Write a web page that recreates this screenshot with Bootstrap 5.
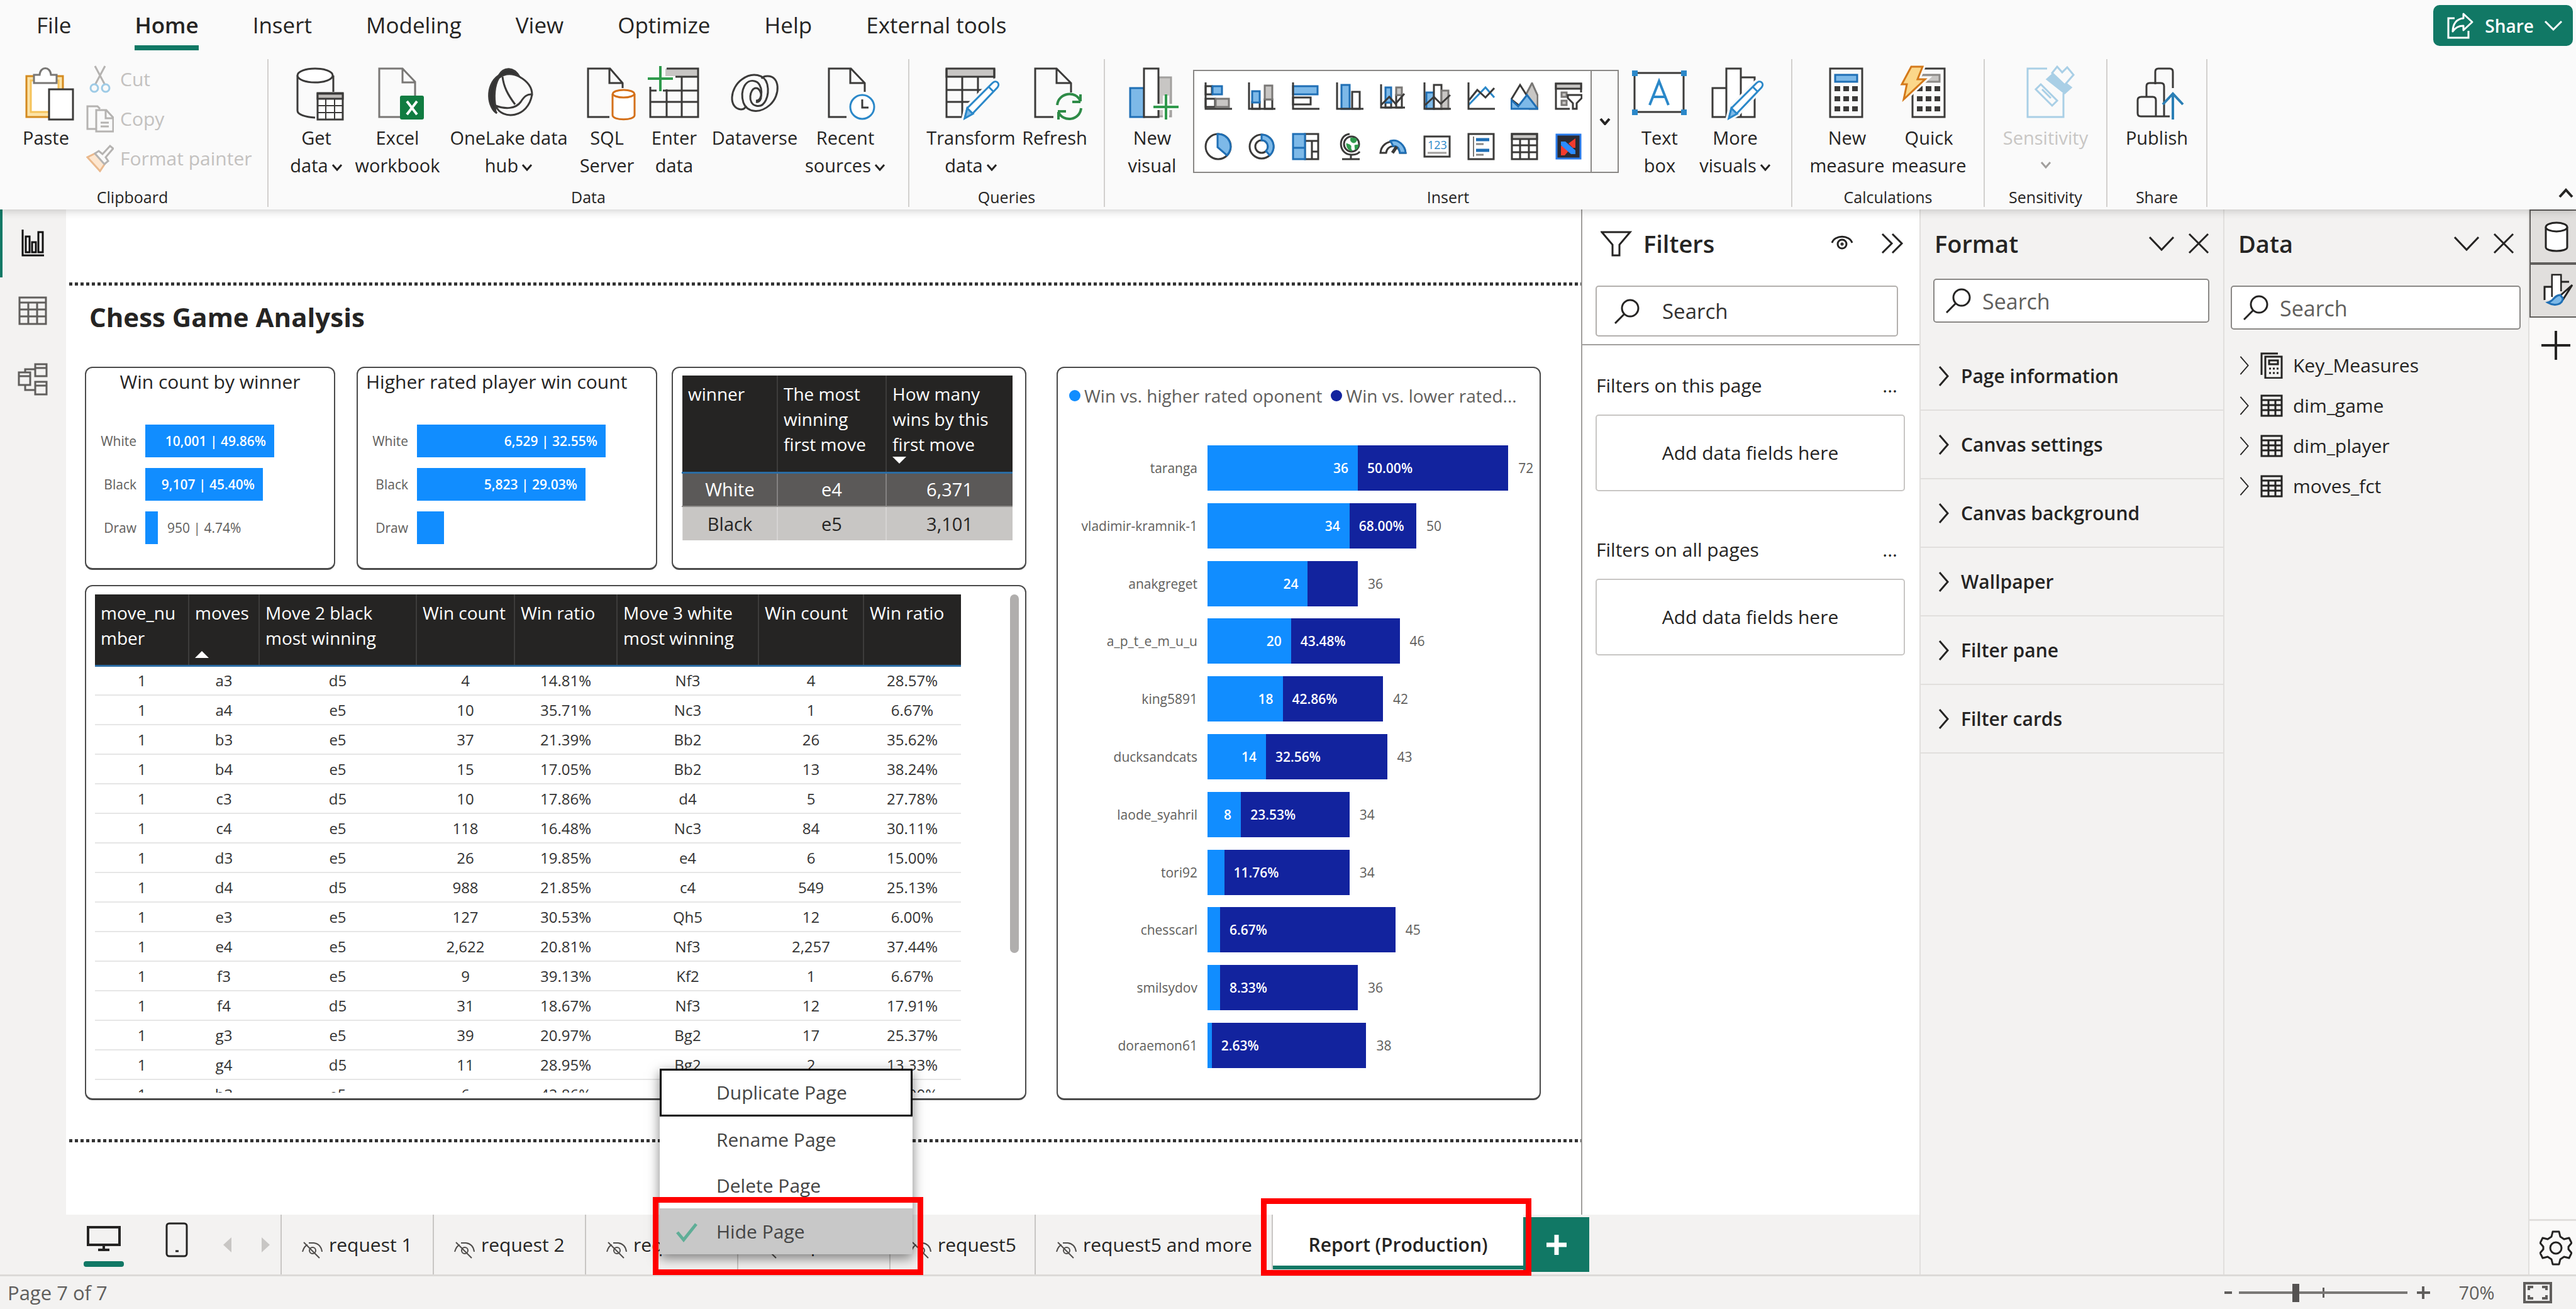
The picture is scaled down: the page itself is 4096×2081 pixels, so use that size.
<!DOCTYPE html>
<html lang="en">
<head>
<meta charset="utf-8">
<meta name="viewport" content="width=device-width, initial-scale=1">
<title>Chess Game Analysis</title>
<link href="https://cdn.jsdelivr.net/npm/bootstrap@5.3.0/dist/css/bootstrap.min.css" rel="stylesheet">
<style>
:root{--ink:#252423;--muted:#605e5c;--pane:#f3f2f1;--rule:#e1dfdd;--green:#117865;--sky:#118dff;--navy:#12239e}
body{font-family:"Open Sans","Noto Sans",sans-serif;font-size:30px;line-height:44px;color:var(--ink);background:var(--pane);overflow:hidden}
button{background:none;border:0;padding:0;color:inherit;text-align:inherit;line-height:inherit}
svg{display:block;flex:none;fill:none;stroke:currentColor}
/* ribbon */
.ribbon{background:#fafafa;z-index:3;box-shadow:0 3px 12px rgba(0,0,0,.18)}
.ribbon-tabs{height:94px;padding-left:58px;padding-right:5px;gap:86px}
.ribbon-tabs a{color:#252423;text-decoration:none;font-size:35px;line-height:48px;padding:16px 0 8px;border-bottom:8px solid transparent}
.ribbon-tabs a:first-child{margin-right:15px}
.ribbon-tabs a.active{font-weight:600;border-color:var(--green)}
.share-btn{background:var(--green);color:#fff;border-radius:10px;height:65px;margin-top:8px;padding:0 16px 0 20px;font-size:28px;font-weight:600;gap:16px}
.ribbon-body{height:235px;margin-bottom:4px}
.rgroup{border-right:2px solid #d2d0ce}
.rgroup .tools{height:204px;padding-top:10px}
.rgroup .caption{font-size:25px;line-height:31px;text-align:center}
.rbtn{width:130px;white-space:nowrap;font-size:29px;text-align:center}
.rbtn svg.big{width:96px;height:88px;margin-bottom:5px;stroke:#3b3a39;stroke-width:3}
.chev{width:18px;height:11px;stroke-width:3;display:inline-block;margin-left:5px}
.clip-list{margin-left:15px;margin-top:-10px}
.clip-list button{height:63px;gap:10px;color:#c3c1bf;white-space:nowrap}
.clip-list svg{width:44px;height:44px;stroke:#b5b3b1;stroke-width:3}
.gallery{width:677px;height:164px;margin:7px 14px 0 9px;border:2px solid #8a8886;background:#fff}
.gallery .cells{display:grid;grid-template-columns:repeat(9,1fr);grid-template-rows:1fr 1fr;padding-left:3px;flex:1}
.gallery .cells button{display:flex;align-items:center;justify-content:center}
.gallery .cells svg{width:44px;height:44px;stroke:#3b3a39;stroke-width:3}
.gallery .more{width:43px;border-left:2px solid #8a8886;background:#fafafa}
/* frame */
.rail{width:105px;background:var(--pane);border-left:4px solid transparent}
.rail button{height:108px;color:#605e5c;width:96px}
.rail svg{width:48px;height:52px;stroke-width:3}
.rail .on{box-shadow:-4px 0 0 var(--green);color:#111}
.canvas{background:#fff;padding:116px 0 115px 5px}
.sheet{padding:20px 64px 62px 25px;position:relative}
.dots{height:5px;background:repeating-linear-gradient(90deg,#333 0 5px,transparent 5px 9px)}
.sheet h1{font-size:42px;line-height:60px;font-weight:700;margin:0 0 49px 7px}
.halves{display:grid;grid-template-columns:minmax(0,1545fr) minmax(0,770fr);grid-template-rows:minmax(0,1fr);min-height:0}
.thirds{display:grid;grid-template-columns:minmax(0,432fr) minmax(0,501fr) minmax(0,564fr);height:323px;flex:none}
.tile{border:2px solid #4a4a4a;border-bottom-width:3px;border-radius:12px;background:#fff}
.tile h2{font-size:30px;line-height:44px;font-weight:400;text-align:center;margin:0}
.hbars{padding:46px 0 0 0;display:grid;gap:17px}
.hbars .line{display:flex;align-items:center;height:52px;font-size:21px;color:var(--muted)}
.hbars .cat{width:80px;text-align:right;margin-right:14px}
.hbars .fill{background:var(--sky);height:52px;line-height:52px;color:#fff;text-align:right;padding-right:13px;font-weight:600;white-space:nowrap;overflow:hidden}
.hbars .fill.thin{padding:0}
.hbars .out{margin-left:15px}
table.grid{table-layout:fixed;border-collapse:collapse}
.grid th{background:#252423;color:#fff;font-weight:400;font-size:28px;line-height:40px;vertical-align:top;border-left:2px solid #3d3c3b;border-bottom:3px solid #2b6ca3;padding:9px 0 0 9px;text-align:left;white-space:nowrap}
.grid th:first-child{border-left:0}
.grid .sort{display:block;width:0;height:0;border:11px solid transparent}
.g-small th{height:154px}
.g-small .sort{border-bottom:0}
.g-small td{text-align:center;font-size:29px;height:54px;border-left:2px solid rgba(255,255,255,.25);padding:0}
.g-small .dark td{background:#5b5958;color:#fff;border-bottom:2px solid #8f8d8b}
.g-small .lite td{background:#c8c6c4;color:#252423}
.g-big th{height:113px;padding-top:9px}
.g-big td{text-align:center;font-size:24px;line-height:34px;height:47px;border-bottom:2px solid #e6e6e6;padding:0;color:#333}
.moves{padding:13px 14px 9px;overflow:hidden;flex:1 1 0;min-height:0}
.thumb{width:14px;height:570px;border-radius:7px;background:#b0aead;margin-right:-4px}
.players{padding:22px 0 48px;display:flex;flex-direction:column}
.legend{font-size:28px;line-height:44px;color:var(--muted);white-space:nowrap;padding-left:18px;margin-bottom:57px}
.legend i{width:18px;height:18px;border-radius:50%;margin-right:6px}
.legend i+i{margin-left:14px}
.stack{display:flex;align-items:center;font-size:21px;color:var(--muted)}
.stack .cat{width:222px;text-align:right;margin-right:16px}
.stack .track{flex:1;display:flex;align-items:center}
.stack .a,.stack .b{height:72px;line-height:72px;color:#fff;font-weight:600;white-space:nowrap}
.stack .a{background:var(--sky);text-align:right}
.stack .b{background:var(--navy)}
.stack .a span,.stack .b span{padding:0 15px}
.stack .sum{margin-left:16px}
/* panes */
.filters{width:538px;border-left:2px solid #a19f9d;background:#fff}
.fpane{width:483px;background:var(--pane);border-left:2px solid var(--rule)}
.dpane{width:485px;background:var(--pane);border-left:2px solid var(--rule)}
.phead{height:108px;font-size:38px;font-weight:600;margin-bottom:2px}
.phead svg{width:36px;height:34px;stroke-width:3}
.searchbox{background:#fff;border:2px solid #8a8886;border-radius:5px;height:70px;padding-left:18px;gap:18px}
.searchbox svg{width:40px;height:40px;stroke-width:3}
.searchbox input{border:0;outline:0;background:none;min-width:0;flex:1;padding:2px 0 0;font-size:34px;color:var(--ink)}
.searchbox input::placeholder{color:#605e5c;opacity:1}
.filters .searchbox{height:81px;border-color:#b3b0ad;margin:13px 34px 12px 21px;padding-left:28px;gap:36px}
.filters .searchbox input{font-size:33px;padding:0}
.filters .searchbox input::placeholder{color:#323130}
.drop{height:122px;border:2px solid #c8c6c4;border-radius:5px;margin:24px 23px 0 21px}
.acc button{height:109px;border-bottom:2px solid var(--rule);font-size:30px;font-weight:600;padding-left:28px;gap:18px;width:100%}
.acc svg{width:18px;height:34px;stroke-width:3}
.tree button{height:64px;padding-left:23px;gap:16px}
.tree svg.c{width:18px;height:32px;stroke-width:2}
.tree svg.t{width:36px;height:42px;stroke-width:3}
.strip{width:76px;background:#faf9f8;border-left:2px solid var(--rule)}
.strip .sel{background:var(--rule);border:2px solid #605e5c;border-right:0;height:86px}
.strip button{padding-left:10px}
.strip svg{width:52px;height:56px;stroke-width:3}
/* page tabs */
.pages{height:95px;background:var(--pane)}
.ptab{width:242px;border-left:2px solid #c8c6c4;position:relative;white-space:nowrap;font-size:30px}
.ptab>button{height:95px;width:100%;padding-left:32px;gap:10px}
.ptab>button svg{width:33px;height:28px;stroke-width:2;margin-top:18px;color:#4f4d4b}
.ptab.wide{width:377px}
.ptab.cur{width:400px;background:#fff;border-bottom:13px solid var(--pane)}
.ptab.cur>button{height:87px;padding:8px 0 0;box-shadow:inset 0 -6px 0 var(--green);font-weight:600}
.add{background:var(--green);width:105px;height:87px;margin-top:4px;color:#fff}
.ctx{position:absolute;left:117px;bottom:32px;width:402px;background:#fff;z-index:2;box-shadow:0 6px 18px rgba(0,0,0,.5);font-size:30px;color:#444}
.ctx button{display:block;width:100%;height:73px;padding-left:90px}
.ctx button:first-child{height:76px;border:3px solid #000;padding-left:87px}
.ctx .on{background:#c8c8c8;position:relative}
.ctx .on svg{position:absolute;left:25px;top:22px;width:36px;height:32px;stroke:#5fae97;stroke-width:5}
.mark-box{position:absolute;border:9px solid #f00;pointer-events:none}
.ctx .mark-box{left:-11px;right:-17px;top:204px;bottom:-33px}
.cur .mark-box{left:-19px;right:-13px;top:-26px;bottom:-15px;z-index:2}
.status{height:55px;border-top:3px solid #dcdad8;color:#605e5c;padding:0 38px 0 12px;font-size:31px}
.zoomer{width:268px;height:30px;background:linear-gradient(#605e5c,#605e5c) 50% 50%/3px 16px no-repeat}
.zoomer input{appearance:none;-webkit-appearance:none;width:100%;height:30px;margin:0;background:linear-gradient(#797775,#797775) 0 50%/100% 4px no-repeat;display:block}
.zoomer input::-webkit-slider-thumb{-webkit-appearance:none;width:11px;height:29px;background:#555352}
</style>
</head>
<body class="vh-100 d-flex flex-column">
<svg width="0" height="0" class="position-absolute" aria-hidden="true">
<symbol id="down" viewBox="0 0 18 11"><path d="M2 1l7 8 7-8"/></symbol>
<symbol id="right" viewBox="0 0 18 34"><path d="M2 2l13 15L2 32"/></symbol>
<symbol id="bigdown" viewBox="0 0 40 34"><path d="M1 7l19 20L39 7"/></symbol>
<symbol id="cross" viewBox="0 0 34 34"><path d="M2 2l30 30M32 2L2 32"/></symbol>
<symbol id="glass" viewBox="0 0 40 40"><circle cx="25" cy="15" r="13"/><path d="M16 24L1 39"/></symbol>
<symbol id="hid" viewBox="0 0 33 28"><path d="M3 1l25 25M1 16C3 9 6 6 9 5M11 2h8c7 1 12 6 13 14"/><circle cx="17" cy="14" r="5"/></symbol>
<symbol id="tbl" viewBox="0 0 36 42"><path d="M2 5h32v32H2zM2 12h32M2 20h32M2 28h32M13 12v25M24 12v25"/></symbol>
<symbol id="pencil" viewBox="0 0 96 88"><path d="M38 84l4-16 40-40c6-6 12 0 8 6L51 76z" fill="#fafafa" stroke="#fafafa" stroke-width="10"/><path d="M38 84l4-16 40-40c6-6 13 1 8 7L50 77z" fill="#fff" stroke="#2b88c9"/><path d="M38 84l4-16 9 9z" fill="#7db9e8" stroke="#2b88c9"/><path d="M76 34l8 8" stroke="#2b88c9"/></symbol>
</svg>

<header class="ribbon position-relative">
  <nav class="ribbon-tabs d-flex align-items-start">
    <a href="#">File</a><a href="#" class="active">Home</a><a href="#">Insert</a><a href="#">Modeling</a><a href="#">View</a><a href="#">Optimize</a><a href="#">Help</a><a href="#">External tools</a>
    <button class="share-btn d-flex align-items-center ms-auto"><svg width="46" height="46" viewBox="0 0 46 46" stroke-width="3"><path d="M14 11H4v31h32V31"/><path d="M28 4l14 13-14 13v-7c-8 0-13 3-17 9 0-12 6-20 17-21z" stroke-linejoin="round"/></svg><span>Share</span><svg width="30" height="18" viewBox="0 0 30 18" stroke-width="3"><path d="M2 2l13 13L28 2"/></svg></button>
  </nav>
  <div class="ribbon-body d-flex">
    <section class="rgroup d-flex flex-column" style="width:427px">
      <div class="tools d-flex">
        <button class="rbtn d-flex flex-column align-items-center ms-4" style="width:98px"><svg class="big" viewBox="0 0 96 88"><path d="M17 17h58v65H17z" fill="#fce3a6" stroke="#d48a1f"/><path d="M24 24h44v50H24z" fill="#fff" stroke="#f5c35b"/><path d="M29 28V15h9c1-14 17-14 18 0h9v13z" fill="#fff" stroke="#797775"/><path d="M53 38h38v48H53z" fill="#fff"/></svg><span>Paste</span></button>
        <div class="clip-list">
          <button class="d-flex align-items-center"><svg viewBox="0 0 44 44"><path d="M14 1l16 30M30 1L14 31"/><circle cx="13" cy="36" r="6" stroke="#9ecbe6"/><circle cx="31" cy="36" r="6" stroke="#9ecbe6"/></svg><span>Cut</span></button>
          <button class="d-flex align-items-center"><svg viewBox="0 0 44 44"><path d="M15 38H2V2h16l4 4M16 8h16l11 12v22H16zM31 8v13h11M23 28h13M23 34h13"/></svg><span>Copy</span></button>
          <button class="d-flex align-items-center"><svg viewBox="0 0 44 44"><path d="M2 20l20 22 8-12-16-16z" fill="#fde6cf" stroke="#eab98d"/><path d="M14 14l6-4 6 5L38 2l5 4-12 14 4 6-6 5z" fill="#fafafa"/></svg><span>Format painter</span></button>
        </div>
      </div>
      <div class="caption pe-1">Clipboard</div>
    </section>
    <section class="rgroup d-flex flex-column" style="width:1019px">
      <div class="tools d-flex" style="padding-left:13px">
        <button class="rbtn d-flex flex-column align-items-center" style="width:126px"><svg class="big" viewBox="0 0 96 88"><path d="M18 16v56c0 6 12 10 28 11M75 16v26"/><ellipse cx="46" cy="16" rx="28" ry="11" fill="#fff"/><path d="M50 44h40v42H50z" fill="#fff"/><path d="M50 45h40v8H50z" fill="#bebbb8"/><path d="M50 64h40M50 75h40M63 53v33M77 53v33" stroke-width="2"/></svg><span>Get</span><span>data<svg class="chev"><use href="#down"/></svg></span></button>
        <button class="rbtn d-flex flex-column align-items-center" style="width:132px"><svg class="big" viewBox="0 0 96 88"><path d="M52 82H19V5h37l20 21v24M56 5v22h20" stroke="#797775"/><rect x="52" y="48" width="38" height="38" rx="3" fill="#107c41" stroke="none"/><path d="M63 57l16 21M79 57L63 78" stroke="#fff" stroke-width="4"/></svg><span>Excel</span><span>workbook</span></button>
        <button class="rbtn d-flex flex-column align-items-center" style="width:222px"><svg class="big" viewBox="0 0 96 88"><path d="M32 16C40 2 56 2 65 18c-12-6-24-5-33 2-7 12-8 30-5 46-1 4 0 8 2 10-14-8-20-44 3-60z" fill="#333"/><path d="M65 18c14 8 20 18 20 28-8-1-13 4-18 12-8 11-24 12-40 6 10 24 52 20 58-18M38 18c2 16 8 28 20 44"/></svg><span>OneLake data</span><span>hub<svg class="chev"><use href="#down"/></svg></span></button>
        <button class="rbtn d-flex flex-column align-items-center" style="width:90px"><svg class="big" viewBox="0 0 96 88"><path d="M52 82H18V5h35l20 23v8M52 5v23h21"/><path d="M57 45v34c0 9 35 9 35 0V45" fill="#fff" stroke="#d4701a"/><ellipse cx="74.500" cy="45" rx="17" ry="6" fill="#fff" stroke="#d4701a"/></svg><span>SQL</span><span>Server</span></button>
        <button class="rbtn d-flex flex-column align-items-center" style="width:124px"><svg class="big" viewBox="0 0 96 88"><path d="M34 5h52v12H34z" fill="#c8c6c4" stroke="none"/><path d="M36 5h50v77H10V34M50 18h36M30 40h56M10 58h76M10 40h10M36 38v44M60 18v64"/><path d="M26 1v40M6 21h40" stroke="#2f9a4c" stroke-width="4"/></svg><span>Enter</span><span>data</span></button>
        <button class="rbtn d-flex flex-column align-items-center" style="width:132px"><svg class="big" viewBox="0 0 96 88"><path d="M26 70C6 68 8 36 28 22c16-12 36-8 40 8 4 18-4 38-18 34-14-3-10-28 0-28s12 24 0 22"/><path d="M68 17c20-1 22 30 4 46-16 14-36 12-42-4-6-20 4-38 18-34 14 3 14 32 2 31"/><path d="M26 70c6 0 7-3 8-6M68 17c-6 0-8 2-9 4"/></svg><span>Dataverse</span></button>
        <button class="rbtn d-flex flex-column align-items-center" style="width:156px"><svg class="big" viewBox="0 0 96 88"><path d="M50 82H22V5h35l22 23v14M56 5v23h23"/><circle cx="75" cy="66" r="19" fill="#fff" stroke="#2b88c9"/><path d="M75 54v13h10"/></svg><span>Recent</span><span>sources<svg class="chev"><use href="#down"/></svg></span></button>
      </div>
      <div class="caption">Data</div>
    </section>
    <section class="rgroup d-flex flex-column" style="width:311px">
      <div class="tools d-flex" style="padding-left:24px">
        <button class="rbtn d-flex flex-column align-items-center" style="width:148px"><svg class="big" viewBox="0 0 96 88"><path d="M9 5h76v13H9z" fill="#c8c6c4"/><path d="M9 5v77h30M85 5v22M9 39h60M9 58h40M34 18v64M59 18v40"/><use href="#pencil"/></svg><span>Transform</span><span>data<svg class="chev"><use href="#down"/></svg></span></button>
        <button class="rbtn d-flex flex-column align-items-center" style="width:118px"><svg class="big" viewBox="0 0 96 88"><path d="M46 82H17V5h34l23 23v15M51 5v23h23"/><path d="M52 63c2-20 30-24 37-6V46M89 58H76M90 68c-2 20-29 23-36 6v12M53 73h13" stroke="#2e8b47" stroke-width="4"/></svg><span>Refresh</span></button>
      </div>
      <div class="caption">Queries</div>
    </section>
    <section class="rgroup d-flex flex-column" style="width:1093px">
      <div class="tools d-flex" style="padding-left:19px">
        <button class="rbtn d-flex flex-column align-items-center" style="width:112px"><svg class="big" viewBox="0 0 96 88"><path d="M58 19h20v62H58z" fill="#c8c6c4" stroke="#a19f9d"/><path d="M13 36h22v46H13z" fill="#7db9e8" stroke="#1f6fb5"/><path d="M35 5h23v77H35z" fill="#fff"/><path d="M70 48v38M50 66h40" stroke="#fafafa" stroke-width="10"/><path d="M70 46v40M50 66h40" stroke="#2f9a4c" stroke-width="4"/></svg><span>New</span><span>visual</span></button>
        <div class="gallery d-flex">
          <div class="cells">
            <button aria-label="Stacked bar"><svg viewBox="0 0 44 44"><path d="M2 6h10v13H2zM2 26h15v13H2z"/><path d="M13 6h15v13H13z" fill="#7db9e8" stroke="#1f6fb5"/><path d="M18 26h21v13H18z" fill="#c8c6c4" stroke="#797775"/><path d="M2 0v42h42"/></svg></button>
            <button aria-label="Stacked column"><svg viewBox="0 0 44 44"><path d="M7 31h12v11H7zM27 27h12v15H27z"/><path d="M7 14h12v18H7z" fill="#7db9e8" stroke="#1f6fb5"/><path d="M27 5h12v22H27z" fill="#c8c6c4" stroke="#797775"/><path d="M2 0v42h42"/></svg></button>
            <button aria-label="Clustered bar"><svg viewBox="0 0 44 44"><path d="M2 6h39v13H2z" fill="#7db9e8" stroke="#1f6fb5"/><path d="M2 24h28v11H2z"/><path d="M2 0v42h42"/></svg></button>
            <button aria-label="Clustered column"><svg viewBox="0 0 44 44"><path d="M9 4h13v38H9z" fill="#7db9e8" stroke="#1f6fb5"/><path d="M26 15h12v27H26z"/><path d="M2 0v42h42"/></svg></button>
            <button aria-label="Line and stacked column"><svg viewBox="0 0 44 44"><path d="M10 32h9v8h-9zM27 20h9v20h-9z"/><path d="M10 8h9v24h-9z" fill="#7db9e8" stroke="#1f6fb5"/><path d="M27 8h9v12h-9z" fill="#c8c6c4" stroke="#797775"/><path d="M3 3v37h38M3 36l13-13 10 11L40 18"/></svg></button>
            <button aria-label="Line and clustered column"><svg viewBox="0 0 44 44"><path d="M5 16h12v26H5z" fill="#7db9e8" stroke="#1f6fb5"/><path d="M17 4h12v38H17z" fill="#fff"/><path d="M29 13h11v29H29z" fill="#c8c6c4" stroke="#797775"/><path d="M2 0v42h42M3 36l14-13 11 11 15-14"/></svg></button>
            <button aria-label="Line"><svg viewBox="0 0 44 44"><path d="M2 36L29 8l14 16" stroke="#2b88c9"/><path d="M2 0v42h42M3 28L16 12l13 12L43 9"/></svg></button>
            <button aria-label="Area"><svg viewBox="0 0 44 44"><path d="M24 20L34 1l9 20v21H30z" fill="#c8c6c4" stroke="#797775"/><path d="M1 27L15 4l14 22-14 12z" fill="#fff"/><path d="M1 28l11 10 14-18 17 22H1z" fill="#7db9e8" stroke="#1f6fb5"/></svg></button>
            <button aria-label="Slicer"><svg viewBox="0 0 44 44"><path d="M24 42H2V2h40v14"/><path d="M2 2h40v8H2z" fill="#c8c6c4"/><path d="M11 16h8v7h-8zM11 29h8v7h-8z" fill="#c8c6c4" stroke="#797775"/><path d="M21 20h22v5l-8 8v9h-6v-9l-8-8z" fill="#fff"/></svg></button>
            <button aria-label="Pie"><svg viewBox="0 0 44 44"><circle cx="22" cy="22" r="20"/><path d="M21 2a20 20 0 0 1 15 34L21 23z" fill="#7db9e8" stroke="#1f6fb5"/></svg></button>
            <button aria-label="Donut"><svg viewBox="0 0 44 44"><circle cx="22" cy="22" r="19"/><circle cx="22" cy="22" r="10"/><path d="M22 3a19 19 0 0 1 13 33l-6-7a10 10 0 0 0-7-17z" fill="#7db9e8" stroke="#1f6fb5"/></svg></button>
            <button aria-label="Treemap"><svg viewBox="0 0 44 44"><path d="M21 2h21v40H21zM21 13h21M32 13v29M32 30h10"/><path d="M2 2h19v22H2zM2 24h19v18H2z" fill="#7db9e8" stroke="#1f6fb5"/></svg></button>
            <button aria-label="Map"><svg viewBox="0 0 44 44"><circle cx="25" cy="18" r="12" fill="#fff"/><path d="M24 8c-2 6 2 8 5 8 4-1 5-4 3-7zM17 17c4 2 8 2 7 6s4 6 1 6c-5-1-8-6-8-12zM30 20l6-1c0 4-2 7-5 8z" fill="#2f9a4c" stroke="#2f9a4c" stroke-width="1"/><path d="M22 2C2 4 4 36 26 35c6 0 10-2 12-5M24 35v7M10 42h28"/></svg></button>
            <button aria-label="Gauge"><svg viewBox="0 0 44 44"><path d="M2 32c2-24 38-24 40 0h-9c-2-14-20-14-22 0z" fill="#fff"/><path d="M18 13c13-4 23 8 24 19h-9c-1-8-5-11-11-11z" fill="#7db9e8" stroke="#1f6fb5"/><path d="M21 32l7-10" stroke-width="5"/></svg></button>
            <button aria-label="Card"><svg viewBox="0 0 44 44"><path d="M2 6h40v32H2z"/><path d="M7 32h30" stroke="#a19f9d"/><text x="7" y="26" font-size="18" fill="#2b88c9" stroke="none">123</text></svg></button>
            <button aria-label="Multi-row card"><svg viewBox="0 0 44 44"><path d="M2 2h40v40H2z"/><path d="M14 11h21M14 28h21" stroke="#1f6fb5" stroke-width="5"/><path d="M14 18h12M14 35h12" stroke="#8a8886"/><path d="M10 6v32" stroke="#797775" stroke-width="2"/></svg></button>
            <button aria-label="Table"><svg viewBox="0 0 44 44"><path d="M2 2h40v8H2z" fill="#c8c6c4"/><path d="M2 2h40v40H2zM2 20h40M2 31h40M15 10v32M29 10v32"/></svg></button>
            <button aria-label="Custom visual"><svg viewBox="0 0 44 44"><path d="M3 3h38v38H3z" fill="#2b2b33" stroke="#2a7bea"/><path d="M33 9v15h-4l-7-7zM10 36V21h5l7 8-6 7z" fill="#f33b2e" stroke="none"/><path d="M10 14h7l16 14v6h-7L10 20z" fill="#2a8bff" stroke="none"/></svg></button>
          </div>
          <button class="more d-flex align-items-center justify-content-center" aria-label="More visuals"><svg width="18" height="11" stroke-width="4"><use href="#down"/></svg></button>
        </div>
        <button class="rbtn d-flex flex-column align-items-center" style="width:102px"><svg class="big" viewBox="0 0 96 88"><path d="M8 12h78v62H8z" fill="#fff"/><path d="M32 63l15-38 15 38M37 50h20" stroke="#2b88c9" stroke-width="4"/><path d="M4 8h9v9H4zM82 8h9v9h-9zM4 70h9v9H4zM82 70h9v9h-9z" fill="#2b88c9" stroke="none"/></svg><span>Text</span><span>box</span></button>
        <button class="rbtn d-flex flex-column align-items-center" style="width:138px"><svg class="big" viewBox="0 0 96 88"><path d="M12 36h22v46H12zM34 5h23v77H34zM57 19h22v63H57z" fill="#fff"/><use href="#pencil"/></svg><span>More</span><span>visuals<svg class="chev"><use href="#down"/></svg></span></button>
      </div>
      <div class="caption">Insert</div>
    </section>
    <section class="rgroup d-flex flex-column" style="width:306px">
      <div class="tools d-flex" style="padding-left:22px">
        <button class="rbtn d-flex flex-column align-items-center"><svg class="big" viewBox="0 0 96 88"><path d="M21 5h51v77H21z"/><path d="M29 15h35v11H29z" fill="#7db9e8" stroke="#1f6fb5"/><path d="M28 37h38M28 53h38M28 69h38" stroke-width="8" stroke-dasharray="9 5"/></svg><span>New</span><span>measure</span></button>
        <button class="rbtn d-flex flex-column align-items-center"><svg class="big" viewBox="0 0 96 88"><path d="M22 5h51v77H22z"/><path d="M36 15h29v11H36z" fill="#c8c6c4" stroke="#8a8886"/><path d="M29 37h38M29 53h38M29 69h38" stroke-width="8" stroke-dasharray="9 5"/><path d="M20 2h18l-8 20h12L8 54l5-24H5z" fill="#fbd78a" stroke="#fafafa" stroke-width="9"/><path d="M20 2h18l-8 20h12L8 54l5-24H5z" fill="#fbd78a" stroke="#d4791a"/></svg><span>Quick</span><span>measure</span></button>
      </div>
      <div class="caption">Calculations</div>
    </section>
    <section class="rgroup d-flex flex-column" style="width:195px">
      <div class="tools d-flex justify-content-center">
        <button class="rbtn d-flex flex-column align-items-center" style="color:#c8c6c4"><svg class="big" viewBox="0 0 96 88" style="stroke:#a9cfe6"><path d="M50 5H19v77h57V44"/><path d="M40 30l26 26-8 8-26-26zM42 38l14 14"/><path d="M50 22l10-9 28 22-10 9z" fill="#a9cfe6"/><path d="M58 12l8-10 8 9 8-8 10 12-14 16z" fill="#fafafa"/></svg><span>Sensitivity</span><svg class="chev mt-3 ms-0" style="color:#a19f9d"><use href="#down"/></svg></button>
      </div>
      <div class="caption">Sensitivity</div>
    </section>
    <section class="rgroup d-flex flex-column" style="width:159px">
      <div class="tools d-flex justify-content-center">
        <button class="rbtn d-flex flex-column align-items-center"><svg class="big" viewBox="0 0 96 88"><path d="M45 30V10q0-5 5-5h18q5 0 5 5v26M31 50V33q0-5 5-5h18q5 0 5 5v48M23 50h18q5 0 5 5v26H22q-5 0-5-5V55q0-5 6-5zM44 81h24"/><path d="M73 86V45M57 62l16-17 16 17" stroke="#2b7fb5" stroke-width="4"/></svg><span>Publish</span></button>
      </div>
      <div class="caption">Share</div>
    </section>
    <button class="ms-auto align-self-end p-1" aria-label="Collapse ribbon"><svg width="24" height="30" viewBox="0 0 24 30" stroke-width="4"><path d="M2 18L12 7l10 11"/></svg></button>
  </div>
</header>

<main class="d-flex flex-fill" style="min-height:0">
  <nav class="rail d-flex flex-column">
    <button class="on d-flex align-items-center justify-content-center" aria-label="Report view"><svg viewBox="0 0 48 52"><path d="M8 4v41h34M13 15h6v25h-6zM23 24h6v16h-6zM33 8h7v32h-7z"/></svg></button>
    <button class="d-flex align-items-center justify-content-center" aria-label="Table view"><svg viewBox="0 0 48 52"><path d="M3 4h42v42H3zM3 12h42M3 23h42M3 34h42M17 12v34M31 12v34"/></svg></button>
    <button class="d-flex align-items-center justify-content-center" aria-label="Model view"><svg viewBox="0 0 48 52"><path d="M28 2h18v19H28zM28 30h18v20H28zM2 15h18v20H2zM28 8h18M28 36h18M2 21h18M28 10H12v5M12 35v8h16"/></svg></button>
  </nav>
  <div class="d-flex flex-column flex-fill" style="min-width:0">
    <div class="d-flex flex-fill" style="min-height:0">
      <div class="canvas flex-fill d-flex flex-column" style="min-width:0">
        <div class="dots"></div>
        <div class="sheet flex-fill d-flex flex-column" style="min-height:0">
          <h1>Chess Game Analysis</h1>
          <div class="halves flex-fill">
            <div class="d-flex flex-column" style="gap:24px;margin-right:48px">
              <div class="thirds">
                <section class="tile" style="margin-right:34px"><h2>Win count by winner</h2><div class="hbars" id="winner"></div></section>
                <section class="tile" style="margin-right:23px"><h2 class="text-start" style="padding-left:13px">Higher rated player win count</h2><div class="hbars" id="higher"></div></section>
                <section class="tile" style="padding:12px 14px">
                  <table class="grid g-small"><colgroup><col style="width:151px"><col style="width:173px"><col style="width:201px"></colgroup>
                    <thead><tr><th>winner</th><th>The most<br>winning<br>first move</th><th>How many<br>wins by this<br>first move<span class="sort" style="border-top-color:#fff"></span></th></tr></thead>
                    <tbody><tr class="dark"><td>White</td><td>e4</td><td>6,371</td></tr><tr class="lite"><td>Black</td><td>e5</td><td>3,101</td></tr></tbody>
                  </table>
                </section>
              </div>
              <section class="tile moves d-flex justify-content-between">
                <div class="overflow-hidden">
                  <table class="grid g-big"><colgroup><col style="width:149px"><col style="width:112px"><col style="width:250px"><col style="width:156px"><col style="width:163px"><col style="width:225px"><col style="width:167px"><col style="width:155px"></colgroup>
                    <thead><tr><th>move_nu<br>mber</th><th>moves<span class="sort" style="border-bottom-color:#fff;margin-top:30px"></span></th><th>Move 2 black<br>most winning</th><th>Win count</th><th>Win ratio</th><th>Move 3 white<br>most winning</th><th>Win count</th><th>Win ratio</th></tr></thead>
                    <tbody id="moves"></tbody>
                  </table>
                </div>
                <div class="thumb"></div>
              </section>
            </div>
            <section class="tile players">
              <div class="legend d-flex align-items-center"><i style="background:#118dff"></i><span style="margin-right:14px">Win vs. higher rated oponent</span><i style="background:#12239e"></i><span>Win vs. lower rated...</span></div>
              <div class="d-flex flex-column justify-content-between flex-fill" id="players"></div>
            </section>
          </div>
        </div>
        <div class="dots"></div>
      </div>
      <aside class="filters">
        <div class="phead d-flex align-items-center" style="padding:0 25px 0 29px"><svg style="width:50px;height:42px" viewBox="0 0 50 42"><path d="M2 3h45L30 23v17H19V23z"/></svg><span style="margin-left:18px">Filters</span><svg class="ms-auto" viewBox="0 0 36 34"><path d="M2 16C6 3 30 3 34 16"/><circle cx="18" cy="18" r="7"/><circle cx="18" cy="18" r="1"/></svg><svg style="margin-left:44px" viewBox="0 0 36 34"><path d="M2 2l15 15L2 32M18 2l15 15-15 15"/></svg></div>
        <label class="searchbox d-flex align-items-center"><svg><use href="#glass"/></svg><input type="search" placeholder="Search" aria-label="Search filters"></label>
        <div style="border-top:2px solid #a19f9d;padding-top:42px">
          <div class="d-flex justify-content-between" style="padding:0 35px 0 22px"><span>Filters on this page</span><span>...</span></div>
          <div class="drop d-flex align-items-center justify-content-center">Add data fields here</div>
          <div class="d-flex justify-content-between" style="padding:71px 35px 0 22px"><span>Filters on all pages</span><span>...</span></div>
          <div class="drop d-flex align-items-center justify-content-center">Add data fields here</div>
        </div>
      </aside>
    </div>
    <nav class="pages d-flex">
      <div class="d-flex" style="width:341px">
        <button class="d-flex flex-column align-items-center" style="margin-left:28px;width:64px" aria-label="Desktop layout"><svg style="margin-top:17px" width="54" height="42" viewBox="0 0 54 42" stroke-width="4"><path d="M2 3h50v28H2zM27 31v8M18 39h18"/></svg><span style="margin-top:15px;width:64px;height:9px;border-radius:4px;background:#117865"></span></button>
        <button style="margin:12px 0 0 66px" class="align-self-start" aria-label="Mobile layout"><svg width="36" height="56" viewBox="0 0 36 56" stroke-width="3"><rect x="2" y="2" width="32" height="52" rx="4"/><path d="M16 46h5"/></svg></button>
        <button style="margin-left:56px" aria-label="Previous page"><svg width="13" height="24" viewBox="0 0 13 24" style="stroke:none"><path d="M13 0v24L0 12z" fill="#c8c6c4"/></svg></button>
        <button style="margin-left:48px" aria-label="Next page"><svg width="13" height="24" viewBox="0 0 13 24" style="stroke:none"><path d="M0 0v24l13-12z" fill="#c8c6c4"/></svg></button>
      </div>
      <div class="ptab"><button class="d-flex align-items-center"><svg><use href="#hid"/></svg>request 1</button></div>
      <div class="ptab"><button class="d-flex align-items-center"><svg><use href="#hid"/></svg>request 2</button></div>
      <div class="ptab" style="z-index:4"><button class="d-flex align-items-center"><svg><use href="#hid"/></svg>request 3</button>
        <div class="ctx"><button>Duplicate Page</button><button>Rename Page</button><button>Delete Page</button><button class="on"><svg viewBox="0 0 36 32"><path d="M3 16l10 12L33 3"/></svg>Hide Page</button><div class="mark-box"></div></div>
      </div>
      <div class="ptab"><button class="d-flex align-items-center"><svg><use href="#hid"/></svg>request 4</button></div>
      <div class="ptab" style="width:231px"><button class="d-flex align-items-center"><svg><use href="#hid"/></svg>request5</button></div>
      <div class="ptab wide"><button class="d-flex align-items-center"><svg><use href="#hid"/></svg>request5 and more</button></div>
      <div class="ptab cur"><button class="text-center">Report (Production)</button><div class="mark-box"></div></div>
      <button class="add d-flex align-items-center justify-content-center" aria-label="New page"><svg width="34" height="34" viewBox="0 0 34 34" stroke-width="7"><path d="M17 1v32M1 17h32"/></svg></button>
    </nav>
  </div>
  <aside class="fpane">
    <div class="phead d-flex align-items-center" style="padding:0 22px"><span>Format</span><svg class="ms-auto" style="width:40px"><use href="#bigdown"/></svg><svg style="margin-left:22px;width:34px"><use href="#cross"/></svg></div>
    <label class="searchbox d-flex align-items-center" style="margin:2px 22px 31px 20px"><svg><use href="#glass"/></svg><input type="search" placeholder="Search" aria-label="Search format"></label>
    <div class="acc" id="acc"></div>
  </aside>
  <aside class="dpane">
    <div class="phead d-flex align-items-center" style="padding:0 22px"><span>Data</span><svg class="ms-auto" style="width:40px"><use href="#bigdown"/></svg><svg style="margin-left:22px;width:34px"><use href="#cross"/></svg></div>
    <label class="searchbox d-flex align-items-center" style="margin:13px 12px 25px 10px"><svg><use href="#glass"/></svg><input type="search" placeholder="Search" aria-label="Search data"></label>
    <div class="tree">
      <button class="d-flex align-items-center"><svg class="c"><use href="#right"/></svg><svg class="t" viewBox="0 0 36 42"><path d="M2 36V2h26M8 7h26v34H8zM14 13h14v6H14z"/><path d="M14 26h15M14 33h15" stroke-dasharray="3 3"/></svg>Key_Measures</button>
      <button class="d-flex align-items-center"><svg class="c"><use href="#right"/></svg><svg class="t"><use href="#tbl"/></svg>dim_game</button>
      <button class="d-flex align-items-center"><svg class="c"><use href="#right"/></svg><svg class="t"><use href="#tbl"/></svg>dim_player</button>
      <button class="d-flex align-items-center"><svg class="c"><use href="#right"/></svg><svg class="t"><use href="#tbl"/></svg>moves_fct</button>
    </div>
  </aside>
  <div class="strip d-flex flex-column">
    <button class="sel d-flex align-items-center justify-content-center" aria-label="Data pane"><svg viewBox="0 0 52 56"><path d="M9 13v32c0 8 34 8 34 0V13" fill="#fff"/><ellipse cx="26" cy="13" rx="17" ry="7" fill="#fff"/></svg></button>
    <button class="sel d-flex align-items-center justify-content-center" aria-label="Format pane"><svg viewBox="0 0 52 56"><path d="M6 22h13v20L7 44z" fill="#fff" stroke="none"/><path d="M7 43V22h12M19 38V3h14v26M33 14h13"/><path d="M20 4h12v28L20 38z" fill="#fff" stroke="none"/><path d="M51 19L32 36l5 5z" fill="#fff"/><path d="M32 35c-10 0-9 9-20 12 10 6 24 4 24-7z" fill="#7db9e8" stroke="#1f6fb5"/></svg></button>
    <button class="d-flex align-items-center justify-content-center" style="height:88px" aria-label="Add pane"><svg viewBox="0 0 52 56" stroke-width="4"><path d="M26 5v46M3 28h46" stroke-width="4"/></svg></button>
    <button class="d-flex align-items-center justify-content-center mt-auto" style="height:88px;border-top:3px solid #e1dfdd" aria-label="Settings"><svg viewBox="0 0 52 56"><path d="M21 2h10l2 8 6 4 8-2 4 8-5 6v4l5 6-4 8-8-2-6 4-2 8H21l-2-8-6-4-8 2-4-8 5-6v-4l-5-6 4-8 8 2 6-4z" stroke-linejoin="round"/><circle cx="26" cy="28" r="9"/></svg></button>
  </div>
</main>

<footer class="status d-flex align-items-center">
  <span>Page 7 of 7</span>
  <svg class="ms-auto" width="12" height="6" viewBox="0 0 12 6" stroke-width="4"><path d="M0 3h12"/></svg>
  <div class="zoomer" style="margin:0 15px 0 11px"><input type="range" min="0" max="100" value="33" aria-label="Zoom"></div>
  <svg width="21" height="22" viewBox="0 0 21 22" stroke-width="4"><path d="M10 1v20M0 11h21"/></svg>
  <span style="width:148px;text-align:center;font-size:29px">70%</span>
  <svg width="46" height="34" viewBox="0 0 46 34" stroke-width="4"><path d="M2 2h42v30H2zM9 13V8h7M30 8h7v5M37 21v5h-7M16 26H9v-5"/></svg>
</footer>

<script>
const el = id => document.getElementById(id);
/* label, bar length in px, inside text, outside text */
const bars = rows => rows.map(([c, w, t, o]) => `<div class="line"><span class="cat">${c}</span><div class="fill${t ? '' : ' thin'}" style="width:${w}px">${t}</div><span class="out">${o}</span></div>`).join('');
el('winner').innerHTML = bars([['White', 205, '10,001 | 49.86%', ''], ['Black', 187, '9,107 | 45.40%', ''], ['Draw', 20, '', '950 | 4.74%']]);
el('higher').innerHTML = bars([['White', 300, '6,529 | 32.55%', ''], ['Black', 268, '5,823 | 29.03%', ''], ['Draw', 43, '', '']]);
const moves = `a3 d5 4 14.81% Nf3 4 28.57%
a4 e5 10 35.71% Nc3 1 6.67%
b3 e5 37 21.39% Bb2 26 35.62%
b4 e5 15 17.05% Bb2 13 38.24%
c3 d5 10 17.86% d4 5 27.78%
c4 e5 118 16.48% Nc3 84 30.11%
d3 e5 26 19.85% e4 6 15.00%
d4 d5 988 21.85% c4 549 25.13%
e3 e5 127 30.53% Qh5 12 6.00%
e4 e5 2,622 20.81% Nf3 2,257 37.44%
f3 e5 9 39.13% Kf2 1 6.67%
f4 d5 31 18.67% Nf3 12 17.91%
g3 e5 39 20.97% Bg2 17 25.37%
g4 d5 11 28.95% Bg2 2 13.33%
h3 e5 6 42.86% Nf3 1 20.00%`;
el('moves').innerHTML = moves.split('\n').map(r => '<tr><td>1</td>' + r.split(' ').map(v => `<td>${v}</td>`).join('') + '</tr>').join('');
/* player, wins vs. higher rated, total, share label */
const players = [['taranga', 36, 72, '50.00%'], ['vladimir-kramnik-1', 34, 50, '68.00%'], ['anakgreget', 24, 36, ''], ['a_p_t_e_m_u_u', 20, 46, '43.48%'], ['king5891', 18, 42, '42.86%'], ['ducksandcats', 14, 43, '32.56%'], ['laode_syahril', 8, 34, '23.53%'], ['tori92', 4, 34, '11.76%'], ['chesscarl', 3, 45, '6.67%'], ['smilsydov', 3, 36, '8.33%'], ['doraemon61', 1, 38, '2.63%']];
const unit = 100 / 79.5;
el('players').innerHTML = players.map(([n, a, t, p]) => `<div class="stack"><span class="cat">${n}</span><div class="track"><div class="a" style="width:${a * unit}%">${a >= 8 ? `<span>${a}</span>` : ''}</div><div class="b" style="width:${(t - a) * unit}%"><span>${p}</span></div><span class="sum">${t}</span></div></div>`).join('');
el('acc').innerHTML = ['Page information', 'Canvas settings', 'Canvas background', 'Wallpaper', 'Filter pane', 'Filter cards'].map(t => `<button class="d-flex align-items-center"><svg><use href="#right"/></svg>${t}</button>`).join('');
</script>
<script src="https://cdn.jsdelivr.net/npm/bootstrap@5.3.0/dist/js/bootstrap.bundle.min.js"></script>
</body>
</html>
